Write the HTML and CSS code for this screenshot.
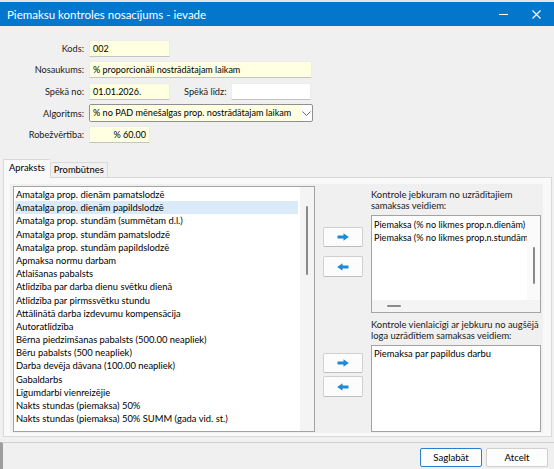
FILE: index.html
```html
<!DOCTYPE html>
<html lang="lv">
<head>
<meta charset="UTF-8">
<title>Piemaksu kontroles nosacījums - ievade</title>
<link rel="stylesheet" href="styles.css">
</head>
<body>
<div class="top-strip"></div>
<div class="window">
  <div class="titlebar">
    <span class="title">Piemaksu kontroles nosacījums - ievade</span>
    <span class="win-btn">
      <svg width="9" height="9" viewBox="0 0 9 9"><path d="M0 4.5h9" stroke="#fff" stroke-width="1"/></svg>
    </span>
    <span class="win-btn close">
      <svg width="9" height="9" viewBox="0 0 9 9"><path d="M0.5 0.5l8 8M8.5 0.5l-8 8" stroke="#fff" stroke-width="1.1"/></svg>
    </span>
  </div>

  <div class="content">
    <div class="form">
      <div class="row">
        <label class="lbl">Kods:</label>
        <div class="field short">002</div>
      </div>
      <div class="row row-name">
        <label class="lbl">Nosaukums:</label>
        <div class="field wide">% proporcionāli nostrādātajam laikam</div>
      </div>
      <div class="row">
        <label class="lbl">Spēkā no:</label>
        <div class="field short">01.01.2026.</div>
        <label class="lbl lbl-inline">Spēkā līdz:</label>
        <div class="field until"></div>
      </div>
      <div class="row">
        <label class="lbl">Algoritms:</label>
        <div class="select">
          <span class="select-text">% no PAD mēnešalgas prop. nostrādātajam laikam</span>
          <span class="select-arrow">
            <svg width="9" height="5" viewBox="0 0 9 5"><path d="M0.5 0.5l4 4 4-4" fill="none" stroke="#666" stroke-width="1"/></svg>
          </span>
        </div>
      </div>
      <div class="row">
        <label class="lbl">Robežvērtība:</label>
        <div class="field limit">% 60.00</div>
      </div>
    </div>

    <div class="tabs">
      <div class="tab-strip">
        <div class="tab active">Apraksts</div>
        <div class="tab">Prombūtnes</div>
      </div>
      <div class="tab-page">
        <div class="panel">
          <div class="listbox main-list">
            <ul class="items">
              <li>Amatalga prop. dienām pamatslodzē</li>
              <li class="selected">Amatalga prop. dienām papildslodzē</li>
              <li>Amatalga prop. stundām (summētam d.l.)</li>
              <li>Amatalga prop. stundām pamatslodzē</li>
              <li>Amatalga prop. stundām papildslodzē</li>
              <li>Apmaksa normu darbam</li>
              <li>Atlaišanas pabalsts</li>
              <li>Atlīdzība par darba dienu svētku dienā</li>
              <li>Atlīdzība par pirmssvētku stundu</li>
              <li>Attālinātā darba izdevumu kompensācija</li>
              <li>Autoratlīdzība</li>
              <li>Bērna piedzimšanas pabalsts (500.00 neapliek)</li>
              <li>Bēru pabalsts (500 neapliek)</li>
              <li>Darba devēja dāvana (100.00 neapliek)</li>
              <li>Gabaldarbs</li>
              <li>Līgumdarbi vienreizējie</li>
              <li>Nakts stundas (piemaksa) 50%</li>
              <li>Nakts stundas (piemaksa) 50% SUMM (gada vid. st.)</li>
            </ul>
            <div class="vscroll main-scroll"><span class="thumb"></span></div>
          </div>

          <div class="movers">
            <button class="move-btn"><svg width="12" height="8" viewBox="0 0 12 8"><path d="M0.5 2.6h6V0.2L11.8 4 6.5 7.8V5.4h-6z" fill="#1d8ad3"/></svg></button>
            <button class="move-btn gap-small"><svg width="12" height="8" viewBox="0 0 12 8"><path d="M11.5 2.6h-6V0.2L0.2 4l5.3 3.8V5.4h6z" fill="#1d8ad3"/></svg></button>
            <button class="move-btn gap-big"><svg width="12" height="8" viewBox="0 0 12 8"><path d="M0.5 2.6h6V0.2L11.8 4 6.5 7.8V5.4h-6z" fill="#1d8ad3"/></svg></button>
            <button class="move-btn gap-tiny"><svg width="12" height="8" viewBox="0 0 12 8"><path d="M11.5 2.6h-6V0.2L0.2 4l5.3 3.8V5.4h6z" fill="#1d8ad3"/></svg></button>
          </div>

          <div class="right-col">
            <div class="caption">Kontrole jebkuram no uzrādītajiem samaksas veidiem:</div>
            <div class="listbox any-list">
              <div class="any-body">
                <ul class="items">
                  <li>Piemaksa (% no likmes prop.n.dienām)</li>
                  <li>Piemaksa (% no likmes prop.n.stundām)</li>
                </ul>
                <div class="vscroll small-scroll"><span class="thumb"></span></div>
              </div>
              <div class="hscroll"><span class="hthumb"></span></div>
            </div>
            <div class="caption caption-second">Kontrole vienlaicīgi ar jebkuru no augšējā loga uzrādītiem samaksas veidiem:</div>
            <div class="listbox with-list">
              <ul class="items">
                <li>Piemaksa par papildus darbu</li>
              </ul>
            </div>
          </div>
        </div>
      </div>
    </div>

    <div class="footer">
      <button class="btn default">Saglabāt</button>
      <button class="btn">Atcelt</button>
    </div>
  </div>
</div>
</body>
</html>
```

FILE: styles.css
```css
body {
  margin: 0;
  padding: 0;
  width: 554px;
  height: 469px;
  overflow: hidden;
  background-color: #f0f0f0;
  font-family: Lato, 'Liberation Sans', sans-serif;
  font-size: 9.4px;
  color: #000;
}

.top-strip {
  height: 2px;
  background-color: #e4e4e4;
}

.window {
  display: flex;
  flex-direction: column;
  height: 467px;
}

/* title bar */
.titlebar {
  height: 24px;
  background-color: #0477cd;
  display: flex;
  align-items: center;
  color: #fff;
  flex-shrink: 0;
}

.title {
  flex: 1;
  padding-left: 7px;
  font-size: 11.5px;
}

.win-btn {
  width: 35px;
  display: flex;
  justify-content: center;
}

.win-btn.close {
  width: 31px;
  margin-right: 2px;
}

.content {
  flex: 1;
  display: flex;
  flex-direction: column;
}

/* header form */
.form {
  padding-top: 14px;
  display: flex;
  flex-direction: column;
  gap: 4px;
}

.row {
  display: flex;
  align-items: center;
}

.row-name {
  margin-bottom: 1px;
}

.lbl {
  width: 84px;
  text-align: right;
  margin-right: 5px;
  color: #1a1a1a;
  font-size: 9.2px;
}

.lbl-inline {
  width: auto;
  margin-left: 14px;
}

.field {
  height: 17px;
  box-sizing: border-box;
  background-color: #ffffe1;
  border: 1px solid #ececec;
  border-bottom-color: #c4c4c4;
  padding: 0 3px;
  line-height: 15px;
  white-space: nowrap;
  font-size: 9px;
}

.field.short {
  width: 81px;
}

.field.wide {
  width: 223px;
}

.field.until {
  width: 80px;
  background-color: #fff;
}

.field.limit {
  width: 61px;
  text-align: right;
}

.select {
  width: 224px;
  height: 18px;
  box-sizing: border-box;
  border: 1px solid #8f8f8f;
  border-radius: 2px;
  display: flex;
  background-color: #fff;
  overflow: hidden;
}

.select-text {
  width: 208px;
  background-color: #ffffe1;
  padding-left: 3px;
  line-height: 16px;
  white-space: nowrap;
  overflow: hidden;
  font-size: 9.1px;
}

.select-arrow {
  flex: 1;
  display: flex;
  align-items: center;
  justify-content: center;
}

/* tabs */
.tabs {
  margin-top: 17px;
  padding-left: 3px;
  padding-right: 2px;
}

.tab-strip {
  display: flex;
  align-items: flex-end;
  height: 17px;
}

.tab {
  height: 14px;
  padding: 0 3px 0 3px;
  border: 1px solid #d9d9d9;
  border-bottom: none;
  line-height: 14px;
  background-color: #f0f0f0;
}

.tab.active {
  padding: 0 5px 0 5px;
  line-height: 15px;
  background-color: #f9f9f9;
  border-right: none;
  position: relative;
  z-index: 1;
  margin-bottom: -1px;
  height: 18px;
}

.tab-page {
  border: 1px solid #d9d9d9;
  background-color: #f9f9f9;
  padding: 6px 8px 1px 6px;
  height: 251px;
}

.panel {
  background-color: #f0f0f0;
  height: 249px;
  padding: 2px 2px 1px 3px;
  box-sizing: border-box;
  display: flex;
}

.listbox {
  border: 1px solid #a3a3a3;
  background-color: #fff;
  box-sizing: border-box;
}

.items {
  list-style: none;
  margin: 0;
  padding: 1px 0 0 0;
  flex: 1;
  overflow: hidden;
}

.items li {
  line-height: 13.2px;
  height: 13.2px;
  padding-left: 2px;
  white-space: nowrap;
}

.items li.selected {
  background-color: #dbeaf9;
  margin-right: 2px;
  padding-left: 1px;
  margin-left: 1px;
}

.main-list {
  width: 302px;
  height: 246px;
  display: flex;
}

.vscroll {
  background-color: #f4f4f4;
  display: flex;
  justify-content: center;
}

.main-scroll {
  width: 14px;
}

.main-scroll .thumb {
  margin-top: 19px;
  width: 2px;
  height: 69px;
  border-radius: 1px;
  background-color: #8a8a8a;
}

/* move buttons */
.movers {
  width: 56px;
  display: flex;
  flex-direction: column;
  align-items: center;
  padding-top: 41px;
}

.move-btn {
  width: 40px;
  height: 20px;
  border: 1px solid #d0d0d0;
  border-bottom-color: #bdbdbd;
  border-radius: 2px;
  background-color: #fcfcfc;
  padding: 0;
  display: flex;
  align-items: center;
  justify-content: center;
}

.gap-small {
  margin-top: 9px;
  height: 21px;
}

.gap-big {
  margin-top: 76px;
}

.gap-tiny {
  margin-top: 3px;
  height: 21px;
}

/* right column */
.right-col {
  width: 170px;
  display: flex;
  flex-direction: column;
}

.caption {
  line-height: 11px;
  padding-top: 3px;
  margin-bottom: 4px;
  color: #1a1a1a;
}

.caption-second {
  padding-top: 6px;
  margin-bottom: 4px;
}

.any-list {
  height: 98px;
  display: flex;
  flex-direction: column;
}

.any-body {
  flex: 1;
  display: flex;
  overflow: hidden;
}

.any-body .items {
  padding-top: 2px;
  font-size: 9.1px;
}

.small-scroll {
  width: 13px;
  background-color: #fafafa;
}

.small-scroll .thumb {
  margin-top: 31px;
  width: 2px;
  height: 37px;
  border-radius: 1px;
  background-color: #8a8a8a;
}

.hscroll {
  height: 12px;
  background-color: #f4f4f4;
  display: flex;
  align-items: center;
}

.hthumb {
  margin-left: 15px;
  width: 14px;
  height: 2px;
  background-color: #8a8a8a;
  border-radius: 1px;
}

.with-list {
  height: 87px;
}

/* footer */
.footer {
  margin-top: 5px;
  flex: 1;
  border-top: 1px solid #cfcfcf;
  border-left: 3px solid #9d9d9d;
  display: flex;
  justify-content: flex-end;
  align-items: flex-start;
  gap: 4px;
  padding: 5px 6px 0 0;
}

.btn {
  height: 19px;
  width: 62px;
  font-family: Lato, 'Liberation Sans', sans-serif;
  font-size: 9.6px;
  background-color: #fdfdfd;
  border: 1px solid #d0d0d0;
  border-radius: 2px;
  padding: 0;
  color: #000;
}

.btn.default {
  border-color: #2b7fd1;
}
```
